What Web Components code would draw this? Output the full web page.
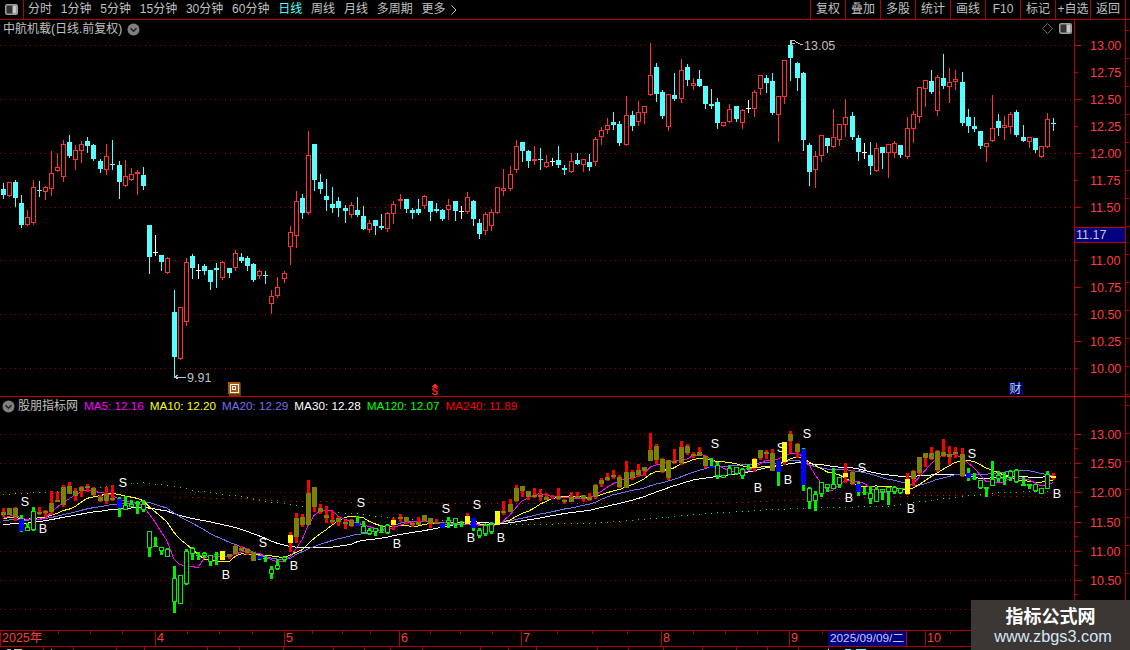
<!DOCTYPE html>
<html lang="zh-CN">
<head>
<meta charset="utf-8">
<title>中航机载</title>
<style>
  html, body { margin: 0; background: #000; }
</style>
</head>
<body>
<kline-app>
  <tool-bar></tool-bar>
  <kline-pane kind="main" name="中航机载(日线.前复权)"></kline-pane>
  <kline-pane kind="indicator" name="股朋指标网"></kline-pane>
  <date-axis></date-axis>
  <status-strip></status-strip>
  <water-mark></water-mark>
</kline-app>

<script>
const RED_LINE = "#b00000";
const FONT = '"Liberation Sans", "Noto Sans CJK SC", sans-serif';

// x, high, top, bottom, low (page pixels of the upper chart), r/c/w
const RAW = `3 183 189 195 198 c|9 182 182 196 196 r|15 180 182 198 206 c|21 195 203 225 227 c|27 210 217 225 225 r|33 180 187 223 224 r
39 181 190 191 196 c|45 186 187 192 199 r|51 151 173 189 195 r|57 153 167 171 171 r|63 140 144 177 181 r|69 135 142 156 157 c
75 145 150 160 169 r|81 141 144 151 162 r|87 137 141 146 152 c|93 144 145 159 160 c|100 159 161 169 172 c|106 144 156 170 174 r
112 140 164 165 169 c|119 161 165 182 198 c|125 160 176 186 186 r|131 168 174 180 180 r|137 170 172 174 194 r|143 167 175 186 189 c
149 225 225 257 273 c|155 235 252 253 255 w|161 255 255 262 270 c|167 257 258 273 273 r|174 290 312 357 377 c|180 307 307 359 359 r
186 258 262 322 325 r|192 254 256 268 278 c|198 264 270 271 278 w|204 264 266 271 274 c|210 270 270 282 289 c|216 263 268 270 287 c
222 261 262 278 279 r|229 268 268 273 277 c|235 250 253 268 270 r|241 253 257 261 262 c|247 256 258 266 270 c|253 263 264 280 281 c
259 270 271 276 278 r|265 271 275 276 283 c|271 290 296 304 313 r|277 277 287 296 297 r|284 271 273 279 282 r|290 226 232 247 264 r
296 191 201 236 247 r|302 194 198 213 218 c|308 131 155 213 214 r|314 144 144 180 190 c|320 174 182 189 193 c|326 179 196 200 210 c
332 187 204 208 212 c|338 197 201 208 216 c|345 205 208 211 222 c|351 202 205 215 217 r|357 197 210 215 216 c|363 206 216 229 229 c
369 220 223 230 232 r|375 220 220 226 234 c|381 214 226 228 229 c|387 212 213 229 231 r|393 201 204 214 223 r|400 194 199 201 208 r
406 199 199 209 212 c|412 208 210 213 218 c|418 199 209 213 214 c|424 195 196 206 208 r|430 201 201 212 220 c|436 203 209 211 212 c
442 209 210 219 220 c|448 199 205 210 219 r|455 201 201 211 220 c|461 206 211 212 218 w|467 192 197 212 213 r|473 200 201 219 225 c
479 219 223 234 238 c|485 212 214 231 234 r|491 209 212 226 230 r|497 187 187 213 213 r|503 169 188 191 195 r|510 166 174 189 190 r
516 140 146 170 172 r|522 142 142 151 161 c|528 150 151 161 167 c|534 146 159 161 164 r|540 148 159 160 169 c|546 155 162 167 167 r
552 158 161 162 165 w|558 146 160 165 167 c|564 165 168 170 174 c|571 153 161 172 172 r|577 153 160 164 164 c|583 159 159 165 171 r
589 154 162 167 170 c|595 137 139 162 165 r|601 127 130 137 144 r|607 118 125 130 133 r|613 112 122 125 129 c|619 121 124 143 145 c
626 96 115 145 145 r|632 111 115 126 130 c|638 101 112 122 125 r|644 106 106 113 123 r|650 43 75 95 95 r|656 63 67 94 101 c
662 90 92 116 118 c|668 94 94 127 130 r|674 73 95 99 100 c|681 59 70 99 102 r|687 64 67 80 85 c|693 78 83 86 89 r
699 70 79 86 86 c|705 86 86 104 108 c|711 89 104 106 108 c|717 98 102 123 128 c|723 122 122 126 126 r|729 104 109 122 122 r
736 106 106 119 121 c|742 109 110 123 128 r|748 100 108 109 112 w|754 90 92 109 116 r|760 75 75 89 94 r|766 75 78 83 92 c
772 73 81 113 114 c|778 96 96 115 141 r|784 60 60 97 103 r|790 40 45 58 80 c|797 62 63 78 90 c|803 72 73 140 150 c
809 143 145 172 185 c|815 151 156 170 187 r|821 135 135 156 161 r|827 138 138 146 152 c|833 109 137 147 147 r|839 124 124 140 145 r
845 99 117 125 136 r|852 112 116 137 139 c|858 135 138 152 160 c|864 143 152 153 158 w|870 142 155 166 174 c|876 143 148 171 171 r
882 147 147 153 168 c|888 144 144 153 177 r|894 141 143 153 157 r|900 145 145 155 157 c|907 117 128 157 158 r|913 111 114 129 142 r
919 87 87 117 122 r|925 80 80 89 106 r|931 70 81 92 93 c|937 75 77 111 115 r|943 54 78 86 88 c|949 68 82 87 102 r
955 70 79 82 89 r|962 72 82 123 125 c|968 109 117 126 132 c|974 117 126 129 131 c|980 131 131 146 148 c|986 143 143 147 161 r
992 95 128 141 141 r|998 114 121 128 135 c|1004 116 125 128 139 r|1010 112 114 127 133 r|1016 110 112 135 136 c|1023 125 137 141 141 c
1029 137 137 142 147 r|1035 138 138 150 152 c|1041 146 146 157 157 r|1047 113 119 147 147 r|1053 118 123 124 130 c`;

const CANDLES = RAW.split(/[|\n]/).map(s => {
  const p = s.trim().split(" ");
  return { x: +p[0], h: +p[1], t: +p[2], b: +p[3], l: +p[4], k: p[5] };
});

// last x of each colour run in the lower chart
const STATES = [[15,"o"],[21,"b"],[33,"g"],[113,"o"],[119,"b"],[216,"g"],[222,"y"],[253,"o"],[259,"b"],[284,"g"],[290,"y"],
  [351,"o"],[357,"b"],[387,"g"],[393,"y"],[436,"o"],[442,"b"],[461,"g"],[467,"y"],[473,"b"],[491,"g"],[497,"y"],[705,"o"],
  [711,"b"],[748,"g"],[754,"y"],[772,"o"],[778,"b"],[784,"y"],[797,"o"],[803,"b"],[839,"g"],[845,"y"],[852,"o"],[858,"b"],
  [900,"g"],[907,"y"],[962,"o"],[968,"b"],[1047,"g"],[1053,"y"]];

const toLower = y => 434 + (y - 45.3) * 0.5404;
const rect = (x, y, w, h, c) => `<rect x="${x}" y="${y}" width="${w}" height="${h}" fill="${c}"/>`;

function mainCandles() {
  let out = "";
  for (const c of CANDLES) {
    const color = c.k === "r" ? "#ff3232" : c.k === "c" ? "#55ffff" : "#ffffff";
    out += rect(c.x, c.h, 1, c.l - c.h + 1, color);
    const bh = c.b - c.t;
    if (bh <= 2 || c.k !== "r") {
      out += rect(c.x - 2, c.t, 5, Math.max(bh, 1), color);
    } else {
      out += rect(c.x - 2, c.t, 5, bh, color) + rect(c.x - 1, c.t + 1, 3, bh - 2, "#000");
    }
  }
  return out;
}

function lowerCandles() {
  let out = "";
  for (const c of CANDLES) {
    const st = STATES.find(s => c.x <= s[0])[1];
    const hi = Math.round(toLower(c.h)), lo = Math.round(toLower(c.l));
    const top = Math.round(toLower(c.t)), bot = Math.round(toLower(c.b));
    const bh = bot - top;
    const wick = st === "o" || st === "y" ? "#ff0000" : "#00f000";
    out += rect(c.x - 1, hi, 3, Math.max(lo - hi, 1), wick);
    if (st === "g") {
      if (bh <= 2) out += rect(c.x - 2, top, 5, Math.max(bh, 1), "#00f000");
      else out += rect(c.x - 2, top, 5, bh, "#00f000") + rect(c.x - 1, top + 1, 3, bh - 2, "#000");
    } else if (bh > 0 || st !== "o") {
      const fill = st === "o" ? "#808000" : st === "b" ? "#0000ff" : "#ffff00";
      out += rect(c.x - 2, top, 5, Math.max(bh, 2), fill);
    }
  }
  return out;
}

// moving averages come from the closes, older days padded to meet the left edge
function movingAverage(n) {
  const pad = [...Array(10).fill(232), ...Array(10).fill(210), ...Array(10).fill(203)];
  const closes = [...pad, ...CANDLES.map(c => (c.k === "c" ? c.b : c.t))];
  return CANDLES.map((c, i) => {
    const w = closes.slice(i + 30 - n + 1, i + 31);
    const avg = w.reduce((a, b) => a + b, 0) / n;
    return `${c.x},${toLower(avg).toFixed(1)}`;
  }).join(" ");
}

function dotted(points, color) {
  let out = "";
  for (const c of CANDLES) {
    if (c.x < points[0][0] || c.x > points[points.length - 1][0]) continue;
    const j = points.findIndex(p => p[0] >= c.x);
    const a = points[Math.max(j - 1, 0)], b = points[j];
    const y = a === b ? a[1] : a[1] + (b[1] - a[1]) * (c.x - a[0]) / (b[0] - a[0]);
    out += rect(c.x, Math.round(y), 1, 1, color);
  }
  return out;
}

const GREEN_DOTS = [[3,494],[40,492],[100,487],[133,483],[143,482],[167,485],[200,491],[233,495],[267,501],[303,506],[337,512],
  [353,513],[370,515],[410,519],[517,524],[590,523],[620,521],[643,519],[707,513],[773,509],[827,507],[887,506],[913,502],
  [963,496],[997,492],[1047,491]];
const RED_DOTS = [[170,497],[247,498],[290,501],[387,502],[483,503],[717,503],[803,499],[923,495],[983,495],[1053,497]];

const SELLS = [[25,501],[123,482],[263,542],[361,502],[446,508],[477,504],[715,443],[781,447],[807,433],[862,467],[972,453]];
const BUYS = [[43,528],[226,574],[294,565],[397,543],[471,537],[501,537],[758,487],[788,479],[849,497],[911,508],[1057,493]];

const grid = (ys, w) => ys.map(y =>
  `<line x1="0" x2="${w}" y1="${y + 0.5}" y2="${y + 0.5}" stroke="#a00000" stroke-dasharray="1 4"/>`).join("");

const CHEVRON = `<svg width="13" height="13" viewBox="0 0 13 13"><circle cx="6.5" cy="6.5" r="6" fill="#808080"/>
  <path d="M3.5 5.2 6.5 8.2 9.5 5.2" fill="none" stroke="#222" stroke-width="1.6"/></svg>`;

const PANEL_ICON = `<svg width="13" height="11" viewBox="0 0 13 11"><rect x=".75" y=".75" width="11.5" height="9.5" rx="1.5" fill="#333" stroke="#a0a0a0" stroke-width="1.5"/>
  <rect x="7.5" y="1.5" width="4" height="8" fill="#c8c8c8"/></svg>`;

class ToolBar extends HTMLElement {
  constructor() {
    super();
    this.attachShadow({ mode: "open" });
    const tabs = ["分时", "1分钟", "5分钟", "15分钟", "30分钟", "60分钟", "日线", "周线", "月线", "多周期", "更多"];
    const btns = ["复权", "叠加", "多股", "统计", "画线", "F10", "标记", "+自选", "返回"];
    this.shadowRoot.innerHTML = `
      <style>
        :host {
          display: flex;
          height: 19px;
          border-bottom: 1px solid ${RED_LINE};
          font: 12px/19px ${FONT};
          color: #c0c0c0;
          white-space: nowrap;
        }
        .icon {
          width: 23px;
          border-right: 1px solid ${RED_LINE};
          display: flex;
          align-items: center;
          justify-content: center;
          margin-right: 4px;
        }
        .tabs { display: flex; gap: 8.8px; }
        .on { color: #55ffff; }
        .more { display: flex; align-items: center; gap: 5px; }
        .btns { margin-left: auto; display: flex; margin-right: 4px; border-right: 1px solid ${RED_LINE}; }
        .btns span { width: 34px; text-align: center; border-left: 1px solid ${RED_LINE}; }
      </style>
      <div class="icon">${PANEL_ICON}</div>
      <div class="tabs">
        ${tabs.map(t => t === "更多"
          ? `<span class="more">${t}<svg width="6" height="10" viewBox="0 0 6 10"><path d="M.5 .5 5 5 .5 9.5" fill="none" stroke="#c0c0c0"/></svg></span>`
          : `<span class="${t === "日线" ? "on" : ""}">${t}</span>`).join("")}
      </div>
      <div class="btns">${btns.map(b => `<span>${b}</span>`).join("")}</div>
    `;
  }
}

class KlinePane extends HTMLElement {
  connectedCallback() {
    const isMain = this.getAttribute("kind") === "main";
    const name = this.getAttribute("name");
    this.attachShadow({ mode: "open" });
    this.shadowRoot.innerHTML = `
      <style>
        :host {
          display: flex;
          height: ${isMain ? 376 : 233}px;
          ${isMain ? `border-bottom: 1px solid #c00000;` : ""}
          font: 12px/18px ${FONT};
          color: #c0c0c0;
        }
        .plot { position: relative; width: 1075px; overflow: hidden; }
        .axis { width: 50px; border-left: 1px solid ${RED_LINE}; border-right: 1px solid ${RED_LINE}; }
        .edge { flex: 1; }
        svg { display: block; }
        .title {
          position: absolute;
          left: ${isMain ? 3 : 2}px;
          top: 0;
          display: flex;
          align-items: center;
          gap: ${isMain ? 5 : 3}px;
          height: 18px;
        }
        .legend { display: flex; gap: 6px; margin-left: 3px; font-size: 11.7px; }
        .corner { position: absolute; right: 2px; top: 3px; display: flex; align-items: center; gap: 6px; }
      </style>
      <div class="plot">
        ${isMain ? this.mainChart() : this.lowerChart()}
        <div class="title">${isMain ? `<span>${name}</span>${CHEVRON}` : `${CHEVRON}<span>${name}</span>
          <div class="legend">
            <span style="color:#ff00ff">MA5: 12.16</span>
            <span style="color:#ffff00">MA10: 12.20</span>
            <span style="color:#7070f0">MA20: 12.29</span>
            <span style="color:#ffffff">MA30: 12.28</span>
            <span style="color:#00ff00">MA120: 12.07</span>
            <span style="color:#ff0000">MA240: 11.89</span>
          </div>`}</div>
        ${isMain ? `<div class="corner">
          <svg width="11" height="11" viewBox="0 0 11 11"><path d="M5.5 .5 10.5 5.5 5.5 10.5 .5 5.5Z" fill="none" stroke="#707070"/></svg>
          ${PANEL_ICON}</div>` : ""}
      </div>
      <div class="axis">${isMain ? this.mainAxis() : this.lowerAxis()}</div>
      <div class="edge">${this.edgeTicks(isMain)}</div>
    `;
  }

  mainChart() {
    return `<svg width="1075" height="376" viewBox="0 20 1075 376" shape-rendering="crispEdges">
      ${grid([45, 99, 153, 207, 260, 314, 368], 1075)}
      ${mainCandles()}
      <path d="M791 46V40H795M792 43H795M795 41.500 800 44H803M175 377H186M175 377l3-2M175 377l3 2" fill="none" stroke="#c0c0c0"/>
      <text x="804" y="50" font-family="Liberation Sans" font-size="12.500" fill="#c0c0c0" shape-rendering="auto">13.05</text>
      <text x="187" y="382" font-family="Liberation Sans" font-size="12.500" fill="#c0c0c0">9.91</text>
      <rect x="229" y="383" width="12" height="13" fill="#6b3a08"/>
      <rect x="228" y="382" width="12" height="12" fill="#a8590f"/>
      <rect x="230" y="384" width="8" height="8" fill="none" stroke="#fff"/>
      <rect x="232" y="386" width="4" height="4" fill="#fff"/>
      <rect x="233" y="387" width="2" height="2" fill="#a8590f"/>
      <path d="M435 383 438 387H432Z" fill="#ff2020"/>
      <text x="431.500" y="395" font-family="Liberation Sans" font-weight="700" font-size="10" fill="#ff2020">S</text>
      <rect x="1009" y="382" width="14" height="13" fill="#000060"/>
      <text x="1009.500" y="393" font-family="Noto Sans CJK SC" font-size="12" fill="#b0d8ff">财</text>
    </svg>`;
  }

  lowerChart() {
    const mark = (list, t) => list.map(([x, y]) =>
      `<text x="${x}" y="${y + 4.5}" text-anchor="middle" font-family="Liberation Sans" font-size="12.500" fill="#fff">${t}</text>`).join("");
    const line = (n, c) =>
      `<polyline points="${movingAverage(n)}" fill="none" stroke="${c}" stroke-width="1"/>`;
    return `<svg width="1075" height="233" viewBox="0 397 1075 233" shape-rendering="crispEdges">
      ${grid([434, 463, 492, 522, 551, 580, 609], 1075)}
      ${dotted(RED_DOTS, "#ff0000")}
      ${dotted(GREEN_DOTS, "#00ff00")}
      ${mark(SELLS, "S")}${mark(BUYS, "B")}
      ${line(30, "#ffffff")}${line(20, "#7070f0")}${line(10, "#ffff00")}${line(5, "#ff00ff")}
      ${lowerCandles()}
    </svg>`;
  }

  axisText(y, t) {
    return `<text x="15" y="${y + 4.5}" font-family="Liberation Sans" font-size="12.500" fill="#ff3c3c">${t}</text>`;
  }

  mainAxis() {
    const labels = [["13.00",45],["12.75",72],["12.50",99],["12.25",126],["12.00",153],["11.75",180],["11.50",207],
      ["11.00",260],["10.75",287],["10.50",314],["10.25",341],["10.00",368]];
    const ticks = labels.map(([t, y], i) => rect(0, y, i % 2 ? 3 : 6, 1, "#c00000")).join("");
    return `<svg width="50" height="376" viewBox="0 20 50 376" shape-rendering="crispEdges">
      ${ticks}${labels.map(([t, y]) => this.axisText(y, t)).join("")}
      <rect x="-1" y="227" width="51" height="15" fill="#000080" stroke="#c00000"/>
      <text x="1" y="239" font-family="Liberation Sans" font-size="12.500" fill="#c8c8d8">11.17</text>
    </svg>`;
  }

  lowerAxis() {
    const labels = [["13.00",434],["12.50",463],["12.00",492],["11.50",522],["11.00",551],["10.50",580]];
    let ticks = "";
    labels.forEach(([t, y]) => { ticks += rect(0, y, 6, 1, "#c00000") + rect(0, y + 14, 3, 1, "#c00000"); });
    return `<svg width="50" height="233" viewBox="0 397 50 233" shape-rendering="crispEdges">
      ${ticks}${labels.map(([t, y]) => this.axisText(y, t)).join("")}
    </svg>`;
  }

  edgeTicks(isMain) {
    const top = isMain ? 20 : 397, h = isMain ? 376 : 233;
    let out = "";
    for (let y = isMain ? 30 : 405; y < top + h; y += 28) out += rect(0, y, 3, 1, "#c00000");
    return `<svg width="4" height="${h}" viewBox="0 ${top} 4 ${h}" shape-rendering="crispEdges">${out}</svg>`;
  }
}

class DateAxis extends HTMLElement {
  constructor() {
    super();
    this.attachShadow({ mode: "open" });
    const cells = [[155, "2025年"], [129, "4"], [115, "5"], [122, "6"], [140, "7"], [128, "8"], [39, "9"]];
    const ticks = [58,90,122,187,219,252,312,342,370,430,460,492,557,592,627,693,725,757,822,853,885,950];
    this.shadowRoot.innerHTML = `
      <style>
        :host {
          display: flex;
          position: relative;
          height: 15px;
          border-top: 1px solid ${RED_LINE};
          border-bottom: 1px solid ${RED_LINE};
          font: 12.5px/15px ${FONT};
          color: #ff3c3c;
        }
        .cell { box-sizing: border-box; padding-left: 1px; border-left: 1px solid ${RED_LINE}; }
        .cell:first-child { border-left: none; padding-left: 3px; }
        .now { width: 79px; background: #000080; color: #c8c8ff; font-size: 11.8px; padding-left: 2px; box-sizing: border-box; border-right: 1px solid ${RED_LINE}; white-space: nowrap; overflow: hidden; }
        .gap { width: 18px; }
        .ticks { position: absolute; left: 0; top: 0; }
      </style>
      ${cells.map(([w, t]) => `<div class="cell" style="width:${w}px">${t}</div>`).join("")}
      <div class="now">2025/09/09/二</div>
      <div class="gap"></div>
      <div class="cell" style="width:60px">10</div>
      <svg class="ticks" width="1130" height="3" shape-rendering="crispEdges">${ticks.map(x => rect(x, 0, 1, 3, RED_LINE)).join("")}</svg>
    `;
  }
}

class StatusStrip extends HTMLElement {
  constructor() {
    super();
    this.attachShadow({ mode: "open" });
    const seps = [43,73,116,144,207,239,283,333,364,390,422,480,508,536,597,628,663,702,736,767,798,828];
    let bars = seps.map(x => rect(x, 0, 1, 3, RED_LINE)).join("");
    bars += rect(7, 2, 4, 1, "#c0c0c0") + rect(14, 2, 8, 1, "#c0c0c0") + rect(51, 2, 1, 1, "#c0c0c0");
    bars += rect(828, 2, 1, 1, "#fff") + rect(845, 2, 6, 1, "#55ffff") + rect(856, 2, 10, 1, "#55ffff");
    this.shadowRoot.innerHTML = `
      <style>
        :host { display: block; height: 3px; overflow: hidden; }
        svg { display: block; }
      </style>
      <svg width="1130" height="3" shape-rendering="crispEdges">${bars}</svg>
    `;
  }
}

class WaterMark extends HTMLElement {
  constructor() {
    super();
    this.attachShadow({ mode: "open" });
    this.shadowRoot.innerHTML = `
      <style>
        :host {
          position: absolute;
          right: 0;
          bottom: 0;
          width: 159px;
          height: 50px;
          background: #3b3735;
          display: flex;
          flex-direction: column;
          align-items: center;
          font-family: ${FONT};
        }
        .cn { margin-top: 4px; font: 700 18px/22px "Noto Sans CJK SC", sans-serif; color: #fff; }
        .url { margin-left: 5px; font-size: 16.3px; line-height: 20px; color: #d6e6fa; }
      </style>
      <div class="cn">指标公式网</div>
      <div class="url">www.zbgs3.com</div>
    `;
  }
}

class KlineApp extends HTMLElement {
  constructor() {
    super();
    this.attachShadow({ mode: "open" });
    this.shadowRoot.innerHTML = `
      <style>
        :host {
          display: block;
          position: relative;
          width: 1130px;
          height: 650px;
          background: #000;
          overflow: hidden;
        }
      </style>
      <slot></slot>
    `;
  }
}

customElements.define("tool-bar", ToolBar);
customElements.define("kline-pane", KlinePane);
customElements.define("date-axis", DateAxis);
customElements.define("status-strip", StatusStrip);
customElements.define("water-mark", WaterMark);
customElements.define("kline-app", KlineApp);
</script>
</body>
</html>
